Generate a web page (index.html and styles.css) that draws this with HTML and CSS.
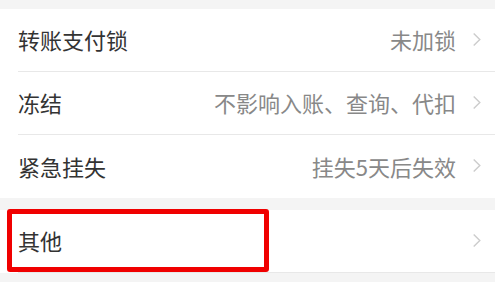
FILE: index.html
```html
<!DOCTYPE html>
<html lang="zh-CN">
<head>
<meta charset="utf-8">
<link rel="stylesheet" href="styles.css">
</head>
<body>
<div class="page">
  <div class="group">
    <div class="row">
      <span class="title">转账支付锁</span>
      <span class="value">未加锁</span>
      <svg class="chev" viewBox="0 0 10 16"><path d="M1.5 1.5 L8 8 L1.5 14.5" fill="none" stroke="#cccccc" stroke-width="1.5"/></svg>
    </div>
    <div class="row">
      <span class="title">冻结</span>
      <span class="value">不影响入账、查询、代扣</span>
      <svg class="chev" viewBox="0 0 10 16"><path d="M1.5 1.5 L8 8 L1.5 14.5" fill="none" stroke="#cccccc" stroke-width="1.5"/></svg>
    </div>
    <div class="row">
      <span class="title">紧急挂失</span>
      <span class="value">挂失5天后失效</span>
      <svg class="chev" viewBox="0 0 10 16"><path d="M1.5 1.5 L8 8 L1.5 14.5" fill="none" stroke="#cccccc" stroke-width="1.5"/></svg>
    </div>
  </div>
  <div class="group group2">
    <div class="row">
      <span class="title">其他</span>
      <span class="value"></span>
      <svg class="chev" viewBox="0 0 10 16"><path d="M1.5 1.5 L8 8 L1.5 14.5" fill="none" stroke="#cccccc" stroke-width="1.5"/></svg>
    </div>
    <div class="highlight"></div>
  </div>
</div>
</body>
</html>
```
FILE: styles.css
```css
html, body {
  margin: 0;
  padding: 0;
  background: #f4f4f4;
}
.page {
  width: 495px;
  height: 282px;
  overflow: hidden;
  padding-top: 9px;
  box-sizing: border-box;
  font-family: "Noto Sans CJK SC", "Noto Sans", sans-serif;
}
.group {
  background: #fff;
  position: relative;
}
.group2 {
  margin-top: 12px;
}
.row {
  display: flex;
  align-items: center;
  height: 63px;
  margin-left: 18px;
  padding-right: 13px;
  padding-bottom: 2px;
  border-bottom: 1px solid #e8e8e8;
  box-sizing: border-box;
}
.group .row:last-of-type {
  border-bottom: none;
}
.title {
  font-size: 22px;
  color: #333;
  flex: 1;
  line-height: 1;
}
.value {
  font-size: 22px;
  color: #888;
  line-height: 1;
  margin-right: 16px;
}
.chev {
  width: 10px;
  height: 15px;
}
.highlight {
  position: absolute;
  left: 7px;
  top: -1px;
  width: 262px;
  height: 63px;
  border: 5px solid #f00000;
  border-radius: 3px;
  box-sizing: border-box;
}
```
